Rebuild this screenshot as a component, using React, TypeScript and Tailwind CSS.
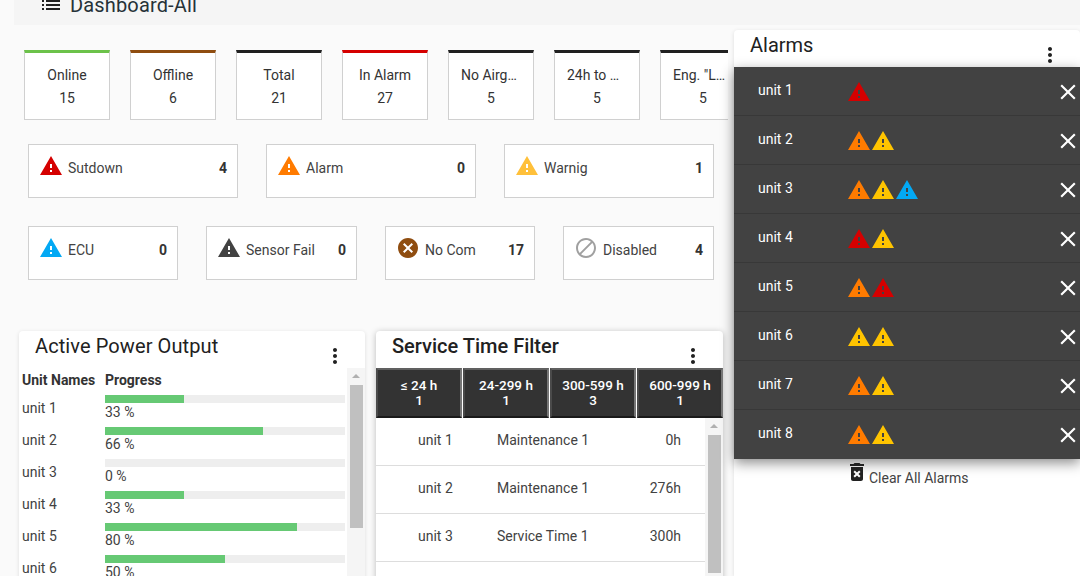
import React from "react";

const WARN = "M1 21h22L12 2 1 21zm12-3h-2v-2h2v2zm0-4h-2v-4h2v4z";
const CANCEL = "M12 2C6.47 2 2 6.47 2 12s4.47 10 10 10 10-4.47 10-10S17.53 2 12 2zm5 13.59L15.59 17 12 13.41 8.41 17 7 15.59 10.59 12 7 8.41 8.41 7 12 10.59 15.59 7 17 8.41 13.41 12 17 15.59z";
const BLOCK = "M12 2C6.48 2 2 6.48 2 12s4.48 10 10 10 10-4.48 10-10S17.52 2 12 2zM4 12c0-4.42 3.58-8 8-8 1.85 0 3.55.63 4.9 1.69L5.69 16.9C4.63 15.55 4 13.85 4 12zm8 8c-1.85 0-3.55-.63-4.9-1.69L18.31 7.1C19.37 8.45 20 10.15 20 12c0 4.42-3.58 8-8 8z";
const LIST = "M3 13h2v-2H3v2zm0 4h2v-2H3v2zm0-8h2V7H3v2zm4 4h14v-2H7v2zm0 4h14v-2H7v2zM7 7v2h14V7H7z";
const MORE = "M12 8c1.1 0 2-.9 2-2s-.9-2-2-2-2 .9-2 2 .9 2 2 2zm0 2c-1.1 0-2 .9-2 2s.9 2 2 2 2-.9 2-2-.9-2-2-2zm0 6c-1.1 0-2 .9-2 2s.9 2 2 2 2-.9 2-2-.9-2-2-2z";
const CLOSE = "M19 6.41L17.59 5 12 10.59 6.41 5 5 6.41 10.59 12 5 17.59 6.41 19 12 13.41 17.59 19 19 17.59 13.41 12z";
const TRASH = "M6 19c0 1.1.9 2 2 2h8c1.1 0 2-.9 2-2V7H6v12zm2.46-7.12l1.41-1.41L12 12.59l2.12-2.12 1.41 1.41L13.41 14l2.12 2.12-1.41 1.41L12 15.41l-2.12 2.12-1.41-1.41L10.59 14l-2.13-2.12zM15.5 4l-1-1h-5l-1 1H5v2h14V4z";

function Icon({ d, color, size = 24 }: { d: string; color: string; size?: number }) {
  return (
    <svg width={size} height={size} viewBox="0 0 24 24" className="block shrink-0" fill={color}>
      <path d={d} />
    </svg>
  );
}

const tiles = [
  { label: "Online", value: "15", top: "border-t-[#6cc24a]", cut: false },
  { label: "Offline", value: "6", top: "border-t-[#8f4d10]", cut: false },
  { label: "Total", value: "21", top: "border-t-[#212121]", cut: false },
  { label: "In Alarm", value: "27", top: "border-t-[#d50000]", cut: false },
  { label: "No Airg…", value: "5", top: "border-t-[#212121]", cut: true },
  { label: "24h to …", value: "5", top: "border-t-[#212121]", cut: true },
  { label: 'Eng. "L…', value: "5", top: "border-t-[#212121]", cut: true },
];

function StatusCard({ d, color, label, value, width }: { d: string; color: string; label: string; value: string; width: string }) {
  return (
    <div className={`${width} h-[54px] shrink-0 bg-white border border-[#d0d0d0] flex items-start pl-[10px] pr-[10px] pt-[9px]`}>
      <Icon d={d} color={color} />
      <span className="ml-[5px] text-[14px] leading-[28px] text-[#424242]">{label}</span>
      <span className="ml-auto text-[14px] leading-[28px] font-bold text-[#333]">{value}</span>
    </div>
  );
}

const progress = [
  { name: "unit 1", pct: 33 },
  { name: "unit 2", pct: 66 },
  { name: "unit 3", pct: 0 },
  { name: "unit 4", pct: 33 },
  { name: "unit 5", pct: 80 },
  { name: "unit 6", pct: 50 },
];

const filters = [
  { label: "≤ 24 h", value: "1" },
  { label: "24-299 h", value: "1" },
  { label: "300-599 h", value: "3" },
  { label: "600-999 h", value: "1" },
];

const service = [
  { unit: "unit 1", type: "Maintenance 1", hours: "0h" },
  { unit: "unit 2", type: "Maintenance 1", hours: "276h" },
  { unit: "unit 3", type: "Service Time 1", hours: "300h" },
];

const RED = "#d50000";
const ORANGE = "#ff7b00";
const YELLOW = "#ffc400";
const BLUE = "#03a9f4";

const alarms = [
  { unit: "unit 1", icons: [RED] },
  { unit: "unit 2", icons: [ORANGE, YELLOW] },
  { unit: "unit 3", icons: [ORANGE, YELLOW, BLUE] },
  { unit: "unit 4", icons: [RED, YELLOW] },
  { unit: "unit 5", icons: [ORANGE, RED] },
  { unit: "unit 6", icons: [YELLOW, YELLOW] },
  { unit: "unit 7", icons: [ORANGE, YELLOW] },
  { unit: "unit 8", icons: [ORANGE, YELLOW] },
];

function Scrollbar({ thumb }: { thumb: string }) {
  return (
    <div className="w-[18px] shrink-0 bg-[#f5f5f5] flex flex-col items-center h-full">
      <div className="w-0 h-0 mt-[6px] border-l-[4px] border-r-[4px] border-b-[4px] border-l-transparent border-r-transparent border-b-[#b0b0b0]" />
      <div className={`mt-[7px] w-[13px] bg-[#c0c0c0] ${thumb}`} />
    </div>
  );
}

export default function App() {
  return (
    <div className="w-[1080px] h-[576px] overflow-hidden bg-[#fafafa] text-[#333] font-['Roboto',sans-serif]">
      <div className="ml-[14px] h-[25px] bg-[#f5f5f5] flex items-end overflow-hidden pl-[25px]">
        <div className="mb-[8px]">
          <Icon d={LIST} color="#212121" />
        </div>
        <span className="ml-[7px] text-[20px] leading-[24px] mb-[8px] text-[#263238] tracking-[0.15px]">Dashboard-All</span>
      </div>
      <div className="flex items-start">
        <div className="w-[734px] shrink-0">
          <div className="w-[728px] mt-[25px] overflow-hidden flex gap-[20px] pl-[24px]">
            {tiles.map((t) => (
              <div key={t.label} className={`w-[86px] h-[70px] shrink-0 bg-white border border-[#d0d0d0] border-t-[3px] ${t.top} flex flex-col items-center text-[14px] text-[#333]`}>
                <span className={`mt-[12px] leading-[20px] ${t.cut ? "self-start ml-[12px]" : ""}`}>{t.label}</span>
                <span className="mt-[3px] leading-[20px]">{t.value}</span>
              </div>
            ))}
          </div>
          <div className="flex gap-[28px] ml-[28px] mt-[24px]">
            <StatusCard d={WARN} color={RED} label="Sutdown" value="4" width="w-[210px]" />
            <StatusCard d={WARN} color={ORANGE} label="Alarm" value="0" width="w-[210px]" />
            <StatusCard d={WARN} color="#ffc03a" label="Warnig" value="1" width="w-[210px]" />
          </div>
          <div className="flex gap-[28px] ml-[28px] mt-[28px]">
            <StatusCard d={WARN} color={BLUE} label="ECU" value="0" width="w-[150px]" />
            <StatusCard d={WARN} color="#424242" label="Sensor Fail" value="0" width="w-[151px]" />
            <StatusCard d={CANCEL} color="#8f4d10" label="No Com" value="17" width="w-[150px]" />
            <StatusCard d={BLOCK} color="#a0a0a0" label="Disabled" value="4" width="w-[151px]" />
          </div>
          <div className="flex ml-[19px] mt-[51px] gap-[11px] items-start">
            <div className="w-[346px] h-[300px] shrink-0 bg-white rounded-t-[4px] shadow-[0_1px_4px_rgba(0,0,0,0.12)] overflow-hidden">
              <div className="h-[37px] relative">
                <span className="absolute left-[16px] top-[2px] text-[20px] leading-[26px] text-[#212121] tracking-[0.1px]">Active Power Output</span>
                <div className="absolute right-[18px] top-[13px]">
                  <Icon d={MORE} color="#212121" />
                </div>
              </div>
              <div className="flex h-[263px]">
                <div className="w-[329px] pl-[3px] text-[14px]">
                  <div className="flex h-[27px] pb-[3px] items-center font-bold text-[#333]">
                    <span className="w-[83px]">Unit Names</span>
                    <span>Progress</span>
                  </div>
                  {progress.map((p) => (
                    <div key={p.name} className="flex h-[32px]">
                      <span className="w-[83px] leading-[20px] pt-[3px] text-[#424242]">{p.name}</span>
                      <div className="w-[240px]">
                        <div className="h-[8px] bg-[#eeeeee]">
                          <div className="h-[8px] bg-[#66c974]" style={{ width: `${p.pct}%` }} />
                        </div>
                        <div className="leading-[18px] text-[#424242]">{p.pct} %</div>
                      </div>
                    </div>
                  ))}
                </div>
                <Scrollbar thumb="h-[143px]" />
              </div>
            </div>
            <div className="w-[347px] h-[300px] shrink-0 bg-white rounded-t-[4px] shadow-[0_1px_6px_rgba(0,0,0,0.25)] overflow-hidden">
              <div className="h-[37px] relative">
                <span className="absolute left-[16px] top-[2px] text-[20px] leading-[26px] font-medium text-[#212121]">Service Time Filter</span>
                <div className="absolute right-[18px] top-[13px]">
                  <Icon d={MORE} color="#212121" />
                </div>
              </div>
              <div className="flex h-[50px] gap-px">
                {filters.map((f) => (
                  <div key={f.label} className="flex-1 bg-[#333333] border-2 border-t-[#606060] border-l-[#4a4a4a] border-r-[#777777] border-b-[#1a1a1a] flex flex-col items-center justify-center text-[13.5px] leading-[15px] font-medium text-white">
                    <span>{f.label}</span>
                    <span>{f.value}</span>
                  </div>
                ))}
              </div>
              <div className="flex h-[213px]">
                <div className="w-[329px]">
                  {service.map((s) => (
                    <div key={s.unit} className="h-[48px] border-b border-[#dddddd] pb-[2px] flex items-center text-[14px] text-[#424242]">
                      <span className="ml-[42px] w-[79px]">{s.unit}</span>
                      <span className="w-[100px]">{s.type}</span>
                      <span className="w-[84px] text-right">{s.hours}</span>
                    </div>
                  ))}
                </div>
                <Scrollbar thumb="h-[138px]" />
              </div>
            </div>
          </div>
        </div>
        <div className="w-[346px] h-[546px] mt-[5px] shrink-0 bg-white rounded-t-[4px] shadow-[0_1px_4px_rgba(0,0,0,0.12)] relative">
          <div className="h-[37px] relative">
            <span className="absolute left-[16px] top-[2px] text-[20px] leading-[26px] text-[#212121]">Alarms</span>
            <div className="absolute right-[18px] top-[13px]">
              <Icon d={MORE} color="#212121" />
            </div>
          </div>
          <div className="bg-[#424242] shadow-[0_4px_12px_rgba(0,0,0,0.45)]">
            {alarms.map((a, i) => (
              <div key={a.unit} className={`h-[49px] flex items-start pl-[24px] ${i < 7 ? "border-b border-[#383838]" : ""}`}>
                <span className="w-[89px] mt-[13px] text-[14px] leading-[20px] text-white">{a.unit}</span>
                <div className="flex mt-[13px]">
                  {a.icons.map((c, j) => (
                    <Icon key={j} d={WARN} color={c} />
                  ))}
                </div>
                <div className="ml-auto mr-[-1px] mt-[12px]">
                  <Icon d={CLOSE} color="#ffffff" size={26} />
                </div>
              </div>
            ))}
          </div>
          <div className="flex items-start ml-[111px] mt-[1px]">
            <Icon d={TRASH} color="#212121" />
            <span className="mt-[8px] text-[14px] leading-[20px] text-[#424242]">Clear All Alarms</span>
          </div>
        </div>
      </div>
    </div>
  );
}
